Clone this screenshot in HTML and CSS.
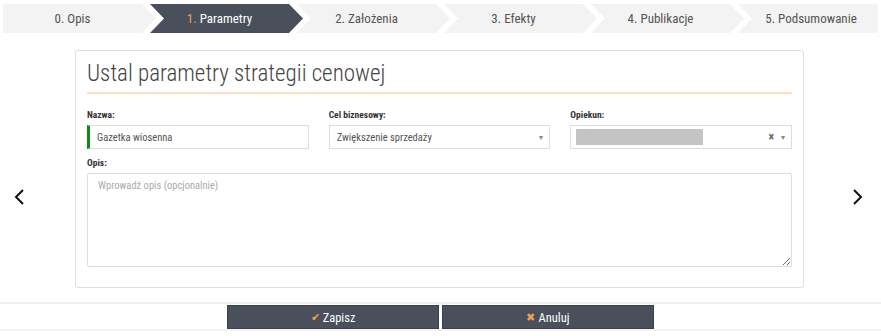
FILE: index.html
```html
<!DOCTYPE html>
<html lang="pl">
<head>
  <meta charset="UTF-8">
  <title>Ustal parametry strategii cenowej</title>
  <link rel="stylesheet" href="styles.css">
</head>
<body>
  <div class="steps">
    <div class="step first">0. Opis</div>
    <div class="step active"><span class="num">1.</span> Parametry</div>
    <div class="step">2. Założenia</div>
    <div class="step">3. Efekty</div>
    <div class="step">4. Publikacje</div>
    <div class="step last">5. Podsumowanie</div>
  </div>

  <div class="main">
    <div class="nav prev">
      <svg width="12" height="16" viewBox="0 0 12 16"><polyline points="9,1 2,8 9,15" fill="none" stroke="#111" stroke-width="2"/></svg>
    </div>
    <div class="panel">
      <h2 class="title">Ustal parametry strategii cenowej</h2>
      <div class="row">
        <div class="field">
          <label>Nazwa:</label>
          <div class="input valid">Gazetka wiosenna</div>
        </div>
        <div class="field">
          <label>Cel biznesowy:</label>
          <div class="input select">Zwiększenie sprzedaży <span class="caret">&#9662;</span></div>
        </div>
        <div class="field">
          <label>Opiekun:</label>
          <div class="input select"><span class="masked"></span><span class="clear">&times;</span><span class="caret">&#9662;</span></div>
        </div>
      </div>
      <div class="field wide">
        <label>Opis:</label>
        <textarea class="textarea" placeholder="Wprowadź opis (opcjonalnie)"></textarea>
      </div>
    </div>
    <div class="nav next">
      <svg width="12" height="16" viewBox="0 0 12 16"><polyline points="3,1 10,8 3,15" fill="none" stroke="#111" stroke-width="2"/></svg>
    </div>
  </div>

  <div class="footer">
    <button class="btn"><span class="ico">&#10004;</span>Zapisz</button>
    <button class="btn"><span class="ico">&#10006;</span>Anuluj</button>
  </div>
</body>
</html>
```

FILE: styles.css
```css
body {
  margin: 0;
  font-family: Roboto, "Liberation Sans", sans-serif;
  font-stretch: 75%;
  color: #444;
  background: #fff;
  width: 881px;
}
.steps {
  display: flex;
  padding: 4px 3px 0;
  height: 29px;
}
.step {
  flex: none;
  width: 153px;
  margin-right: -6px;
  padding-right: 14px;
  box-sizing: border-box;
  background: #f3f3f3;
  color: #555;
  font-size: 13px;
  display: flex;
  align-items: center;
  justify-content: center;
  clip-path: polygon(0 0, calc(100% - 14px) 0, 100% 50%, calc(100% - 14px) 100%, 0 100%, 14px 50%);
}
.step.first {
  clip-path: polygon(0 0, calc(100% - 14px) 0, 100% 50%, calc(100% - 14px) 100%, 0 100%);
}
.step.last {
  flex: 1;
  margin-right: 0;
  padding-right: 0;
  padding-left: 6px;
  clip-path: polygon(0 0, 100% 0, 100% 100%, 0 100%, 14px 50%);
}
.step.active {
  background: #4a4f5c;
  color: #fff;
}
.step .num {
  color: #f0a050;
  margin-right: 3px;
}
.main {
  display: flex;
  align-items: flex-start;
  margin-top: 17px;
}
.nav {
  width: 75px;
  display: flex;
  box-sizing: border-box;
  margin-top: 139px;
}
.nav.prev {
  padding-left: 14px;
}
.nav.next {
  justify-content: flex-end;
  padding-right: 16px;
}
.panel {
  width: 705px;
  border: 1px solid #ddd;
  border-radius: 3px;
  padding: 9px 11px 20px;
  flex: none;
}
.title {
  margin: 0 0 15px;
  font-size: 23px;
  font-weight: 300;
  color: #444;
  padding-bottom: 4px;
  border-bottom: 2px solid #fbe2c2;
  line-height: 28px;
}
.row {
  display: flex;
  gap: 20px;
}
.field {
  flex: 1;
  margin-bottom: 8px;
}
.field label {
  display: block;
  font-size: 9.5px;
  font-weight: bold;
  color: #333;
  margin-bottom: 5px;
}
.input {
  height: 24px;
  box-sizing: border-box;
  border: 1px solid #ddd;
  font-size: 10.5px;
  color: #555;
  padding: 0 10px;
  display: flex;
  align-items: center;
}
.input.valid {
  border-left: 3px solid #108a10;
  padding-left: 7px;
}
.input.select {
  padding: 0 6px 0 7px;
}
.caret {
  margin-left: auto;
  color: #888;
  font-size: 8px;
}
.masked {
  width: 127px;
  height: 16px;
  margin-left: -2px;
  background: #c4c4c4;
}
.clear {
  margin-left: auto;
  margin-right: 7px;
  color: #666;
  font-size: 12px;
  font-weight: bold;
}
.clear + .caret {
  margin-left: 0;
}
.field.wide {
  margin-bottom: 0;
}
.textarea {
  display: block;
  width: 100%;
  height: 94px;
  box-sizing: border-box;
  border: 1px solid #ddd;
  border-radius: 2px;
  padding: 5px 10px;
  font-family: inherit;
  font-stretch: 75%;
  font-size: 10.5px;
  resize: vertical;
  margin: 0;
}
.textarea::placeholder {
  color: #aaa;
}
.footer {
  margin-top: 14px;
  border-top: 2px solid #eee;
  border-bottom: 2px solid #f3f3f3;
  display: flex;
  justify-content: center;
  gap: 3px;
  padding: 1px 0 0;
}
.btn {
  width: 212px;
  height: 24px;
  background: #4a4f5c;
  border: 1px solid #3c404a;
  color: #fff;
  font-family: inherit;
  font-stretch: 75%;
  font-size: 12.5px;
  display: flex;
  align-items: center;
  justify-content: center;
  padding: 0;
}
.btn .ico {
  color: #f0a050;
  font-size: 11px;
  margin-right: 3px;
}
```
